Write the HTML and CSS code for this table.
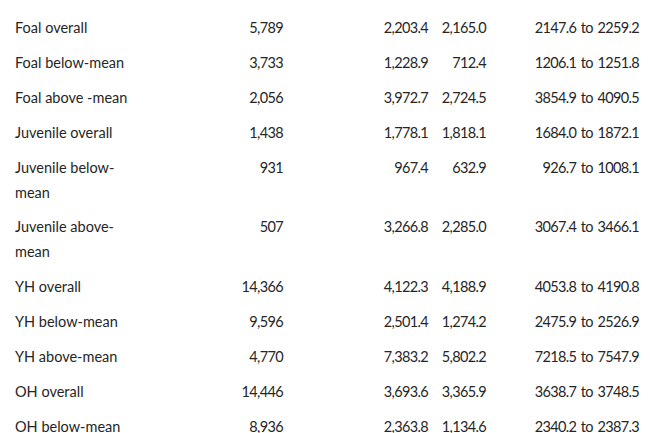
FILE: index.html
```html
<!DOCTYPE html>
<html lang="en">
<head>
<meta charset="utf-8">
<title>Table</title>
<link rel="stylesheet" href="styles.css">
</head>
<body>
<table class="data">
  <colgroup>
    <col class="c-label">
    <col class="c-n">
    <col class="c-mean">
    <col class="c-sd">
    <col class="c-ci">
  </colgroup>
  <tbody>
    <tr><td class="label">Foal overall</td><td>5,789</td><td>2,203.4</td><td>2,165.0</td><td>2147.6 to 2259.2</td></tr>
    <tr><td class="label">Foal below-mean</td><td>3,733</td><td>1,228.9</td><td>712.4</td><td>1206.1 to 1251.8</td></tr>
    <tr><td class="label">Foal above -mean</td><td>2,056</td><td>3,972.7</td><td>2,724.5</td><td>3854.9 to 4090.5</td></tr>
    <tr><td class="label">Juvenile overall</td><td>1,438</td><td>1,778.1</td><td>1,818.1</td><td>1684.0 to 1872.1</td></tr>
    <tr><td class="label">Juvenile below-mean</td><td>931</td><td>967.4</td><td>632.9</td><td>926.7 to 1008.1</td></tr>
    <tr><td class="label">Juvenile above-mean</td><td>507</td><td>3,266.8</td><td>2,285.0</td><td>3067.4 to 3466.1</td></tr>
    <tr><td class="label">YH overall</td><td>14,366</td><td>4,122.3</td><td>4,188.9</td><td>4053.8 to 4190.8</td></tr>
    <tr><td class="label">YH below-mean</td><td>9,596</td><td>2,501.4</td><td>1,274.2</td><td>2475.9 to 2526.9</td></tr>
    <tr><td class="label">YH above-mean</td><td>4,770</td><td>7,383.2</td><td>5,802.2</td><td>7218.5 to 7547.9</td></tr>
    <tr><td class="label">OH overall</td><td>14,446</td><td>3,693.6</td><td>3,365.9</td><td>3638.7 to 3748.5</td></tr>
    <tr><td class="label">OH below-mean</td><td>8,936</td><td>2,363.8</td><td>1,134.6</td><td>2340.2 to 2387.3</td></tr>
  </tbody>
</table>
</body>
</html>
```

FILE: styles.css
```css
html, body {
  margin: 0;
  padding: 0;
  background: #ffffff;
}

body {
  font-family: Lato, "Open Sans", sans-serif;
  font-size: 14.5px;
  color: #262626;
  overflow: hidden;
}

.data {
  border-collapse: collapse;
  table-layout: fixed;
  width: 640px;
  margin-left: 7px;
  margin-top: 11px;
}

.c-label { width: 136px; }
.c-n { width: 148px; }
.c-mean { width: 145px; }
.c-sd { width: 58px; }
.c-ci { width: 153px; }

.data td {
  padding: 5px 8px 5px 0;
  line-height: 24.9px;
  text-align: right;
  vertical-align: top;
  font-weight: 400;
  white-space: nowrap;
  letter-spacing: -0.65px;
  word-spacing: 1.5px;
}

.data .label {
  padding: 5px 8px;
  text-align: left;
  white-space: normal;
  letter-spacing: 0;
  word-spacing: 0;
}
```
